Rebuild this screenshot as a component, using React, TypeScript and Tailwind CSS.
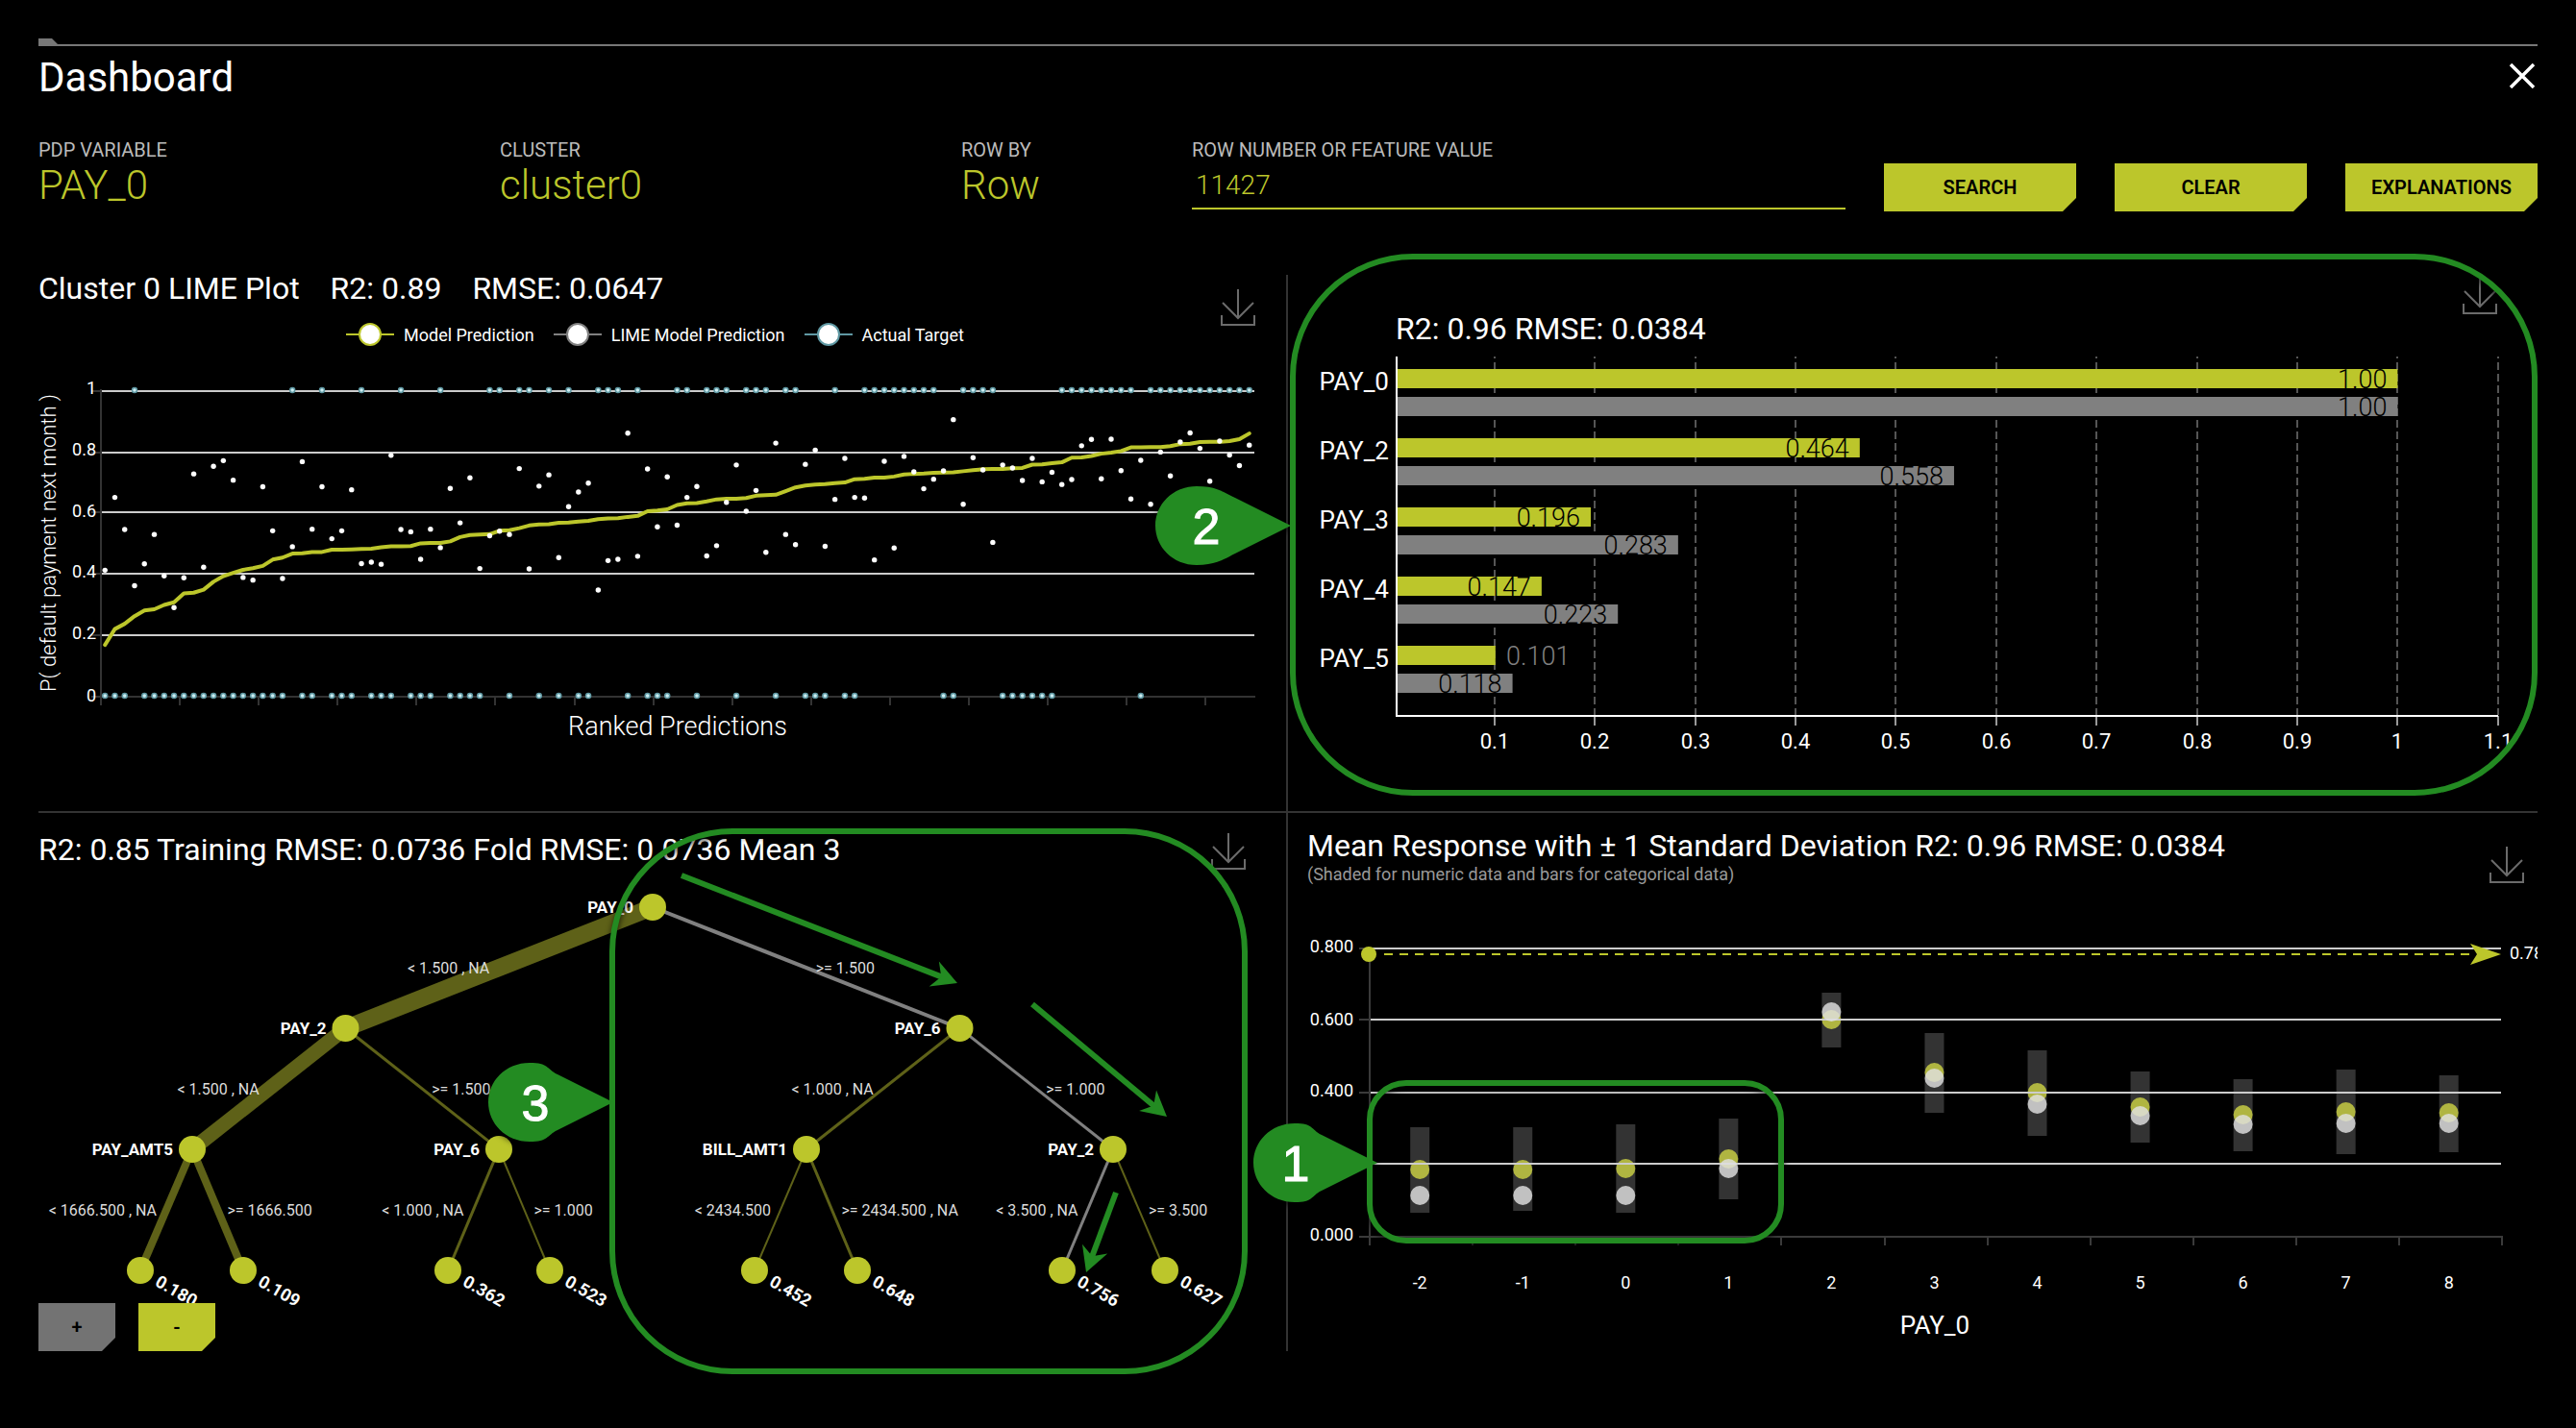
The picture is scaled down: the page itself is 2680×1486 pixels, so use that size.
import React from "react";

const LIME = "#bcc62b";
const OLIVE = "#5e6118";
const GRAY = "#808080";
const GREEN = "#238b22";

/* ---------- shared pieces ---------- */

function CutButton({ children, muted = false, className = "" }: { children: React.ReactNode; muted?: boolean; className?: string }) {
  return (
    <button
      type="button"
      className={`h-[50px] text-xl font-semibold text-black [clip-path:polygon(0_0,100%_0,100%_calc(100%-14px),calc(100%-14px)_100%,0_100%)] ${muted ? "bg-[#737373]" : "bg-[#bcc62b]"} ${className}`}
    >
      {children}
    </button>
  );
}

function DownloadButton({ label, className }: { label: string; className: string }) {
  return (
    <button type="button" aria-label={label} className={`shrink-0 ${className}`}>
      <svg width="36" height="40" viewBox="0 0 36 40" fill="none" stroke="#6b6b6b" strokeWidth="2">
        <path d="M18 1V31M2 15L18 31L34 15M1 28V38H35V28" />
      </svg>
    </button>
  );
}

function SelectField({ id, label, value, className }: { id: string; label: string; value: string; className: string }) {
  return (
    <div className={`flex h-[76px] flex-col ${className}`}>
      <label htmlFor={id} className="h-6 text-xl leading-6 whitespace-nowrap text-[#bbb]">
        {label}
      </label>
      <select id={id} defaultValue={value} className="h-[50px] w-full appearance-none bg-transparent text-[42px] leading-[50px] font-light text-[#bcc62b] outline-none">
        <option value={value}>{value}</option>
      </select>
    </div>
  );
}

function Title({ children, className = "" }: { children: React.ReactNode; className?: string }) {
  return <h2 className={`text-[32px] leading-8 whitespace-nowrap text-white ${className}`}>{children}</h2>;
}

/* ---------- LIME plot ---------- */

// Levels run from 1348 (probability 0) up to 424 (probability 1).
const MODEL = [
  1194, 1146, 1130, 1107, 1090, 1086, 1073, 1065, 1038, 1036, 1027, 1003, 986, 976, 967, 962, 955, 936, 930, 918, 917, 913, 913, 906, 906, 905, 904,
  903, 899, 896, 896, 895, 887, 886, 886, 881, 868, 862, 860, 859, 849, 847, 841, 833, 830, 829, 825, 824, 821, 819, 814, 812, 811, 807, 804, 790, 788,
  784, 771, 766, 765, 760, 754, 752, 752, 750, 743, 741, 740, 729, 718, 712, 709, 708, 705, 703, 693, 692, 688, 688, 685, 679, 677, 676, 674, 673, 672,
  669, 666, 663, 662, 662, 660, 659, 649, 648, 645, 642, 628, 627, 623, 616, 613, 608, 597, 597, 596, 596, 593, 587, 586, 581, 580, 580, 578, 572, 555,
];
const LIME_POINTS = [
  968, 748, 845, 1015, 949, 860, 985, 1081, 991, 677, 959, 654, 637, 696, 990, 998, 716, 849, 993, 897, 640, 844, 716, 873, 849, 725, 948, 944, 950, 621,
  845, 852, 935, 844, 900, 721, 825, 689, 963, 864, 850, 860, 661, 964, 714, 680, 930, 776, 732, 705, 1028, 939, 935, 554, 926, 662, 837, 686, 832, 748,
  715, 925, 894, 763, 650, 790, 727, 914, 584, 860, 891, 648, 605, 896, 754, 630, 748, 750, 937, 639, 901, 624, 671, 722, 693, 668, 513, 769, 628, 665,
  884, 650, 659, 697, 630, 701, 672, 709, 694, 592, 573, 692, 572, 667, 753, 636, 769, 611, 683, 581, 553, 600, 699, 578, 620, 652, 590,
];
const POSITIVE = new Set([
  3, 19, 22, 26, 30, 34, 39, 40, 42, 43, 45, 47, 50, 51, 52, 54, 58, 59, 61, 62, 63, 65, 66, 67, 69, 70, 74, 77, 78, 79, 80, 81, 82, 83, 84, 87, 88, 89,
  90, 97, 98, 99, 100, 101, 102, 103, 104, 106, 107, 108, 109, 110, 111, 112, 113, 114, 115, 116,
]);
const px = (i: number) => 109.2 + 10.263 * i;
const py = (level: number) => 260 + level / 2.904;

function LegendItem({ color, children }: { color: string; children: React.ReactNode }) {
  return (
    <li className="flex items-center gap-2.5">
      <svg width="50" height="24" viewBox="0 0 50 24">
        <path d="M0 12H50" stroke={color} strokeWidth="2" />
        <circle cx="25" cy="12" r="11" fill="white" stroke={color} strokeWidth="2" />
      </svg>
      {children}
    </li>
  );
}

function LimeChart() {
  return (
    <svg viewBox="40 370 1298 474" className="mt-2.5 block w-full overflow-visible fill-white">
      {[407, 471, 533, 597, 661].map((y) => (
        <g key={y}>
          <path d={`M95 ${y}H105`} stroke="#333" strokeWidth="2" />
          <path d={`M106 ${y}H1305`} stroke="#ccc" strokeWidth="2" />
        </g>
      ))}
      <path d="M105 405V734M95 725H1306" stroke="#333" strokeWidth="2" fill="none" />
      {Array.from({ length: 14 }, (_, i) => (
        <path key={i} d={`M${187 + Math.round(i * 82.1)} 725V734`} stroke="#333" strokeWidth="2" />
      ))}
      {[
        ["1", 410],
        ["0.8", 474],
        ["0.6", 538],
        ["0.4", 601],
        ["0.2", 665],
        ["0", 730],
      ].map(([t, y]) => (
        <text key={t} x="100" y={y} textAnchor="end" className="text-[18px]">
          {t}
        </text>
      ))}
      <polyline points={MODEL.map((l, i) => `${px(i)},${py(l)}`).join(" ")} fill="none" stroke={LIME} strokeWidth="4" strokeLinejoin="round" strokeLinecap="round" />
      {MODEL.map((_, i) => (
        <circle key={i} cx={px(i)} cy={POSITIVE.has(i) ? 406 : 724} r="2.5" fill="#cdeef2" stroke="#5f98a3" strokeWidth="1.5" />
      ))}
      {LIME_POINTS.map((l, i) => (
        <circle key={i} cx={px(i)} cy={py(l)} r="2.7" />
      ))}
      <text transform="translate(58 565) rotate(-90)" textAnchor="middle" className="text-[22px] font-light">
        P( default payment next month )
      </text>
      <text x="705" y="765" textAnchor="middle" className="text-[27px] font-light">
        Ranked Predictions
      </text>
    </svg>
  );
}

/* ---------- importance bars ---------- */

const BARS = [
  { name: "PAY_0", a: 1, b: 1, la: "1.00", lb: "1.00" },
  { name: "PAY_2", a: 0.464, b: 0.558, la: "0.464", lb: "0.558" },
  { name: "PAY_3", a: 0.196, b: 0.283, la: "0.196", lb: "0.283" },
  { name: "PAY_4", a: 0.147, b: 0.223, la: "0.147", lb: "0.223" },
  { name: "PAY_5", a: 0.101, b: 0.118, la: "0.101", lb: "0.118" },
];
const bx = (v: number) => 1450.4 + v * 1044;

function ImportanceChart() {
  return (
    <svg viewBox="1340 365 1300 479" className="block w-full fill-white">
      {Array.from({ length: 11 }, (_, i) => {
        const x = Math.round(bx((i + 1) / 10));
        return (
          <g key={i}>
            <path d={`M${x} 371V744`} stroke="#555" strokeWidth="2" strokeDasharray="8 4" strokeDashoffset="6" />
            <path d={`M${x} 745V755`} stroke="#999" strokeWidth="2" />
            <text x={x} y="779" textAnchor="middle" className="text-[22px]">
              {["0.1", "0.2", "0.3", "0.4", "0.5", "0.6", "0.7", "0.8", "0.9", "1", "1.1"][i]}
            </text>
          </g>
        );
      })}
      {BARS.map((r, i) => {
        const y = 384 + i * 72;
        const outside = r.name === "PAY_5";
        return (
          <g key={r.name}>
            <rect x="1454" y={y} width={bx(r.a) - 1454} height="20" fill={LIME} />
            <rect x="1454" y={y + 29} width={bx(r.b) - 1454} height="20" fill={GRAY} />
            <text x="1445" y={y + 22} textAnchor="end" className="text-[26px]">
              {r.name}
            </text>
            <text x={outside ? 1567 : bx(r.a) - 11} y={y + 20} textAnchor={outside ? "start" : "end"} fill={outside ? GRAY : "black"} className="text-[27px] font-light">
              {r.la}
            </text>
            <text x={bx(r.b) - 11} y={y + 49} textAnchor="end" fill="black" className="text-[27px] font-light">
              {r.lb}
            </text>
          </g>
        );
      })}
      <path d="M1453 371V745H2599" stroke="white" strokeWidth="2" fill="none" />
    </svg>
  );
}

/* ---------- decision tree ---------- */

type Edge = { x1: number; y1: number; x2: number; y2: number; w: number; text: string; gray?: boolean };
const EDGES: Edge[] = [
  { x1: 679, y1: 944, x2: 359.5, y2: 1070, w: 18, text: "< 1.500 , NA" },
  { x1: 679, y1: 944, x2: 998.5, y2: 1070, w: 4, text: ">= 1.500", gray: true },
  { x1: 359.5, y1: 1070, x2: 200, y2: 1196, w: 15, text: "< 1.500 , NA" },
  { x1: 359.5, y1: 1070, x2: 519, y2: 1196, w: 3, text: ">= 1.500" },
  { x1: 998.5, y1: 1070, x2: 839, y2: 1196, w: 3, text: "< 1.000 , NA" },
  { x1: 998.5, y1: 1070, x2: 1158, y2: 1196, w: 3, text: ">= 1.000", gray: true },
  { x1: 200, y1: 1196, x2: 146, y2: 1322, w: 8, text: "< 1666.500 , NA" },
  { x1: 200, y1: 1196, x2: 253, y2: 1322, w: 8, text: ">= 1666.500" },
  { x1: 519, y1: 1196, x2: 466, y2: 1322, w: 3, text: "< 1.000 , NA" },
  { x1: 519, y1: 1196, x2: 572, y2: 1322, w: 2, text: ">= 1.000" },
  { x1: 839, y1: 1196, x2: 785, y2: 1322, w: 2, text: "< 2434.500" },
  { x1: 839, y1: 1196, x2: 892, y2: 1322, w: 3, text: ">= 2434.500 , NA" },
  { x1: 1158, y1: 1196, x2: 1105, y2: 1322, w: 3, text: "< 3.500 , NA", gray: true },
  { x1: 1158, y1: 1196, x2: 1212, y2: 1322, w: 2, text: ">= 3.500" },
];
const NODES: [number, number, string][] = [
  [679, 944, "PAY_0"],
  [359.5, 1070, "PAY_2"],
  [998.5, 1070, "PAY_6"],
  [200, 1196, "PAY_AMT5"],
  [519, 1196, "PAY_6"],
  [839, 1196, "BILL_AMT1"],
  [1158, 1196, "PAY_2"],
];
const LEAVES: [number, string][] = [
  [146, "0.180"],
  [253, "0.109"],
  [466, "0.362"],
  [572, "0.523"],
  [785, "0.452"],
  [892, "0.648"],
  [1105, "0.756"],
  [1212, "0.627"],
];

function TreeChart() {
  return (
    <svg viewBox="40 916 1298 440" className="block w-full overflow-visible fill-white">
      {EDGES.map((e, i) => (
        <path key={i} d={`M${e.x1} ${e.y1}L${e.x2} ${e.y2}`} stroke={e.gray ? GRAY : OLIVE} strokeWidth={e.w} />
      ))}
      {EDGES.map((e, i) => {
        const left = e.x2 < e.x1;
        return (
          <text key={i} x={(e.x1 + e.x2) / 2 + (left ? -10 : 10)} y={(e.y1 + e.y2) / 2 + 6} textAnchor={left ? "end" : "start"} fill="#ddd" className="text-[16px]">
            {e.text}
          </text>
        );
      })}
      {NODES.map(([x, y, t], i) => (
        <g key={i}>
          <text x={x - 20} y={y + 6} textAnchor="end" className="text-[17px] font-bold">
            {t}
          </text>
          <circle cx={x} cy={y} r="14" fill={LIME} />
        </g>
      ))}
      {LEAVES.map(([x, t]) => (
        <g key={t} transform={`translate(${x} 1322)`}>
          <circle r="14" fill={LIME} />
          <text x="20" y="6" transform="rotate(30)" className="text-[18px] font-bold">
            {t}
          </text>
        </g>
      ))}
    </svg>
  );
}

/* ---------- partial dependence ---------- */

// label, bar top, bar bottom, lime dot, white dot
const PDP: [string, number, number, number, number][] = [
  ["-2", 1173, 1262, 1217, 1244],
  ["-1", 1173, 1260, 1217, 1244],
  ["0", 1170, 1262, 1216, 1244],
  ["1", 1164, 1248, 1206, 1216],
  ["2", 1033, 1090, 1061, 1053],
  ["3", 1075, 1158, 1116, 1122],
  ["4", 1093, 1182, 1137, 1149],
  ["5", 1115, 1189, 1152, 1161],
  ["6", 1123, 1198, 1160, 1170],
  ["7", 1113, 1201, 1157, 1169],
  ["8", 1119, 1199, 1158, 1169],
];

function PdpChart() {
  return (
    <svg viewBox="1360 926 1280 480" className="block w-full fill-white">
      <path d="M1425 987V1296M1414 1287H2603M1414 987H1425M1414 1061H1425M1414 1137H1425" stroke="#3a3a3a" strokeWidth="2" fill="none" />
      {PDP.map((_, i) => (
        <path key={i} d={`M${Math.round(1425 + (i + 1) * 107.1)} 1286V1296`} stroke="#3a3a3a" strokeWidth="2" />
      ))}
      {PDP.map(([t, top, bottom, dot], i) => {
        const x = 1477.2 + i * 107.05;
        return (
          <g key={t}>
            <rect x={x - 10} y={top} width="20" height={bottom - top} fill="#333" />
            <circle cx={x} cy={dot} r="10" fill="#b0b541" />
            <text x={x} y="1341" textAnchor="middle" className="text-[18px]">
              {t}
            </text>
          </g>
        );
      })}
      {[987, 1061, 1137, 1211].map((y) => (
        <path key={y} d={`M1426 ${y}H2602`} stroke="#ccc" strokeWidth="2" />
      ))}
      {PDP.map(([t, , , , dot], i) => (
        <circle key={t} cx={1477.2 + i * 107.05} cy={dot} r="10" fill="#e0e0e0" fillOpacity="0.82" />
      ))}
      {[
        ["0.800", 991],
        ["0.600", 1067],
        ["0.400", 1141],
        ["0.000", 1291],
      ].map(([t, y]) => (
        <text key={t} x="1408" y={y} textAnchor="end" className="text-[18px]">
          {t}
        </text>
      ))}
      <path d="M1440 993H2572" stroke={LIME} strokeWidth="2" strokeDasharray="9 7" />
      <circle cx="1424" cy="993" r="8" fill={LIME} />
      <path d="M2570 982L2602 993L2570 1004L2577 993Z" fill={LIME} />
      <text x="2611" y="998" className="text-[18px]">
        0.78
      </text>
      <text x="2013" y="1388" textAnchor="middle" className="text-[26px]">
        PAY_0
      </text>
    </svg>
  );
}

/* ---------- green callouts ---------- */

function Pin({ x, y, back, label, n }: { x: number; y: number; back: number; label: number; n: string }) {
  const c = -back + 43;
  return (
    <g transform={`translate(${x} ${y})`}>
      <path
        d={`M0 0L-58 -29C-70 -35 ${c + 20} -41 ${c} -41C${c - 25} -41 ${-back} -22 ${-back} 0C${-back} 22 ${c - 25} 41 ${c} 41C${c + 20} 41 -70 35 -58 29Z`}
        fill={GREEN}
      />
      <text x={-label} y="19" textAnchor="middle" stroke="white" strokeWidth="1" className="text-[52px] [font-family:'Liberation_Sans',Arial,sans-serif]">
        {n}
      </text>
    </g>
  );
}

function Arrow({ x1, y1, x2, y2 }: { x1: number; y1: number; x2: number; y2: number }) {
  const len = Math.hypot(x2 - x1, y2 - y1);
  const deg = (Math.atan2(y2 - y1, x2 - x1) * 180) / Math.PI;
  return (
    <g transform={`translate(${x1} ${y1}) rotate(${deg})`} fill={GREEN}>
      <rect y="-3" width={len - 14} height="6" />
      <path d={`M${len} 0L${len - 26} -14L${len - 18} 0L${len - 26} 14Z`} />
    </g>
  );
}

function Callouts() {
  return (
    <svg viewBox="40 286 2600 1120" className="pointer-events-none absolute inset-x-0 top-0 w-full overflow-visible fill-white [filter:drop-shadow(0_3px_3px_rgba(0,0,0,0.7))]">
      <g fill="none" stroke={GREEN} strokeWidth="6">
        <rect x="1345" y="267" width="1292" height="558" rx="125" />
        <rect x="637" y="865" width="658" height="562" rx="125" />
        <rect x="1425" y="1127" width="428" height="164" rx="38" />
      </g>
      <Pin x={1343} y={547} back={141} label={88} n="2" />
      <Pin x={638} y={1147} back={130} label={81} n="3" />
      <Pin x={1433} y={1210} back={129} label={85} n="1" />
      <Arrow x1={709} y1={911} x2={996} y2={1023} />
      <Arrow x1={1074} y1={1045} x2={1214} y2={1162} />
      <Arrow x1={1161} y1={1241} x2={1130} y2={1324} />
    </svg>
  );
}

/* ---------- page ---------- */

export default function App() {
  return (
    <main className="min-h-screen overflow-hidden bg-black px-10 pt-10 pb-20 font-['Roboto',sans-serif] text-white">
      <div className="h-2 border-b-2 border-[#777]">
        <div className="h-1.5 w-5 bg-[#777] [clip-path:polygon(0_0,70%_0,100%_100%,0_100%)]" />
      </div>
      <header className="flex h-24 items-start justify-between pt-1.5">
        <h1 className="text-[42px] leading-[54px]">Dashboard</h1>
        <button type="button" aria-label="Close" className="mt-3">
          <svg width="32" height="26" viewBox="0 0 32 26" fill="none" stroke="white" strokeWidth="3.5">
            <path d="M4 1L28 25M28 1L4 25" />
          </svg>
        </button>
      </header>

      <form className="grid grid-cols-11 items-end gap-10" onSubmit={(e) => e.preventDefault()}>
        <SelectField id="pdp" label="PDP VARIABLE" value="PAY_0" className="col-span-2" />
        <SelectField id="cluster" label="CLUSTER" value="cluster0" className="col-span-2" />
        <SelectField id="rowby" label="ROW BY" value="Row" className="" />
        <div className="col-span-3 flex h-[76px] flex-col">
          <label htmlFor="row" className="h-6 text-xl leading-6 text-[#bbb]">
            ROW NUMBER OR FEATURE VALUE
          </label>
          <input id="row" defaultValue="11427" className="h-[50px] w-full border-b-2 border-[#bcc62b] bg-transparent px-1 text-[28px] font-light text-[#bcc62b] outline-none" />
        </div>
        <CutButton>SEARCH</CutButton>
        <CutButton>CLEAR</CutButton>
        <CutButton>EXPLANATIONS</CutButton>
      </form>

      <div className="relative mt-[66px] grid grid-cols-2">
        <section className="border-r-2 border-b-2 border-[#333]">
          <div className="flex h-[50px] items-start justify-between pr-8">
            <div className="-mt-0.5 flex gap-8">
              <Title>Cluster 0 LIME Plot</Title>
              <Title>R2: 0.89</Title>
              <Title>RMSE: 0.0647</Title>
            </div>
            <DownloadButton label="Download LIME plot" className="mt-[14px]" />
          </div>
          <ul className="flex h-6 items-center gap-5 pl-80 text-[18px] whitespace-nowrap">
            <LegendItem color="#bcc62b">Model Prediction</LegendItem>
            <LegendItem color="#808080">LIME Model Prediction</LegendItem>
            <LegendItem color="#5f98a3">Actual Target</LegendItem>
          </ul>
          <LimeChart />
        </section>

        <section className="border-b-2 border-[#333]">
          <div className="flex h-[79px] items-start justify-between pr-[42px] pl-28">
            <Title className="mt-10">R2: 0.96 RMSE: 0.0384</Title>
            <DownloadButton label="Download importance chart" className="mt-0.5" />
          </div>
          <ImportanceChart />
        </section>

        <section className="border-r-2 border-[#333]">
          <div className="flex h-[70px] items-start justify-between pr-[42px]">
            <Title className="mt-[22px]">R2: 0.85 Training RMSE: 0.0736 Fold RMSE: 0.0736 Mean 3</Title>
            <DownloadButton label="Download decision tree" className="mt-5" />
          </div>
          <TreeChart />
          <div className="flex gap-6">
            <CutButton muted className="w-20">
              +
            </CutButton>
            <CutButton className="w-20">-</CutButton>
          </div>
        </section>

        <section className="pl-5">
          <div className="flex h-20 items-start justify-between pr-3.5">
            <div className="flex flex-col gap-0.5 pt-[18px]">
              <Title>Mean Response with ± 1 Standard Deviation R2: 0.96 RMSE: 0.0384</Title>
              <p className="text-[18px] leading-6 text-[#999]">(Shaded for numeric data and bars for categorical data)</p>
            </div>
            <DownloadButton label="Download mean response chart" className="mt-[34px]" />
          </div>
          <PdpChart />
        </section>

        <Callouts />
      </div>
    </main>
  );
}
